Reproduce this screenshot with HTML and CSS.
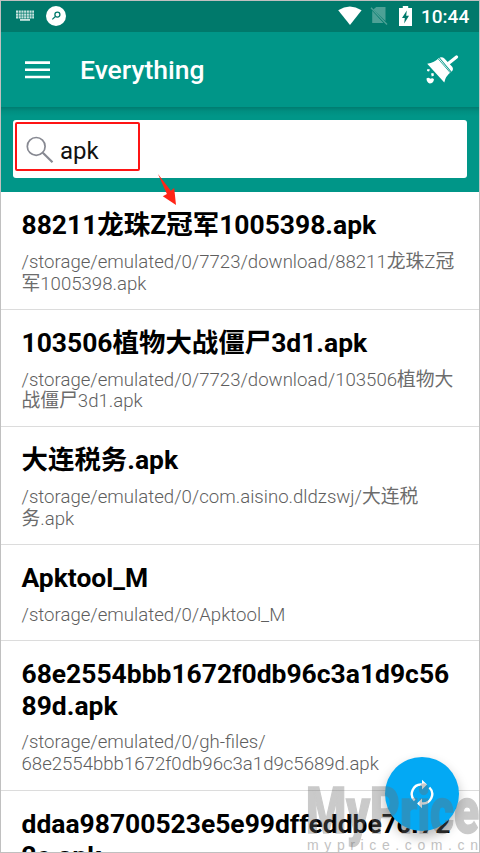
FILE: index.html
```
<!DOCTYPE html>
<html lang="zh">
<head>
<meta charset="utf-8">
<title>Everything</title>
<link rel="stylesheet" href="styles.css">
</head>
<body>
<div class="screen">
  <header class="status">
    <svg class="keyboard" width="20" height="12" viewBox="0 0 20 12">
      <g stroke="#c8e4e0" stroke-width="2.3" stroke-dasharray="2.1 .6">
        <path d="M1 1.6H19M1 4.6H19M1 7.4H19"/>
      </g>
      <path d="M5 9.9H15" stroke="#c8e4e0" stroke-width="1.8"/>
    </svg>
    <svg class="finder" width="20" height="20" viewBox="0 0 20 20">
      <circle cx="10" cy="10" r="10" fill="#fff"/>
      <circle cx="11.4" cy="8.6" r="2.5" fill="none" stroke="#00796b" stroke-width="1.3"/>
      <path d="M9.4 10.5L6.3 13.4" stroke="#00796b" stroke-width="1.2"/>
    </svg>
    <svg class="wifi" width="24" height="20" viewBox="0 0 24 20"><path d="M.2 4.2Q11.8-3.2 23.6 4.2L12 19Z" fill="#fff"/></svg>
    <svg class="sim" width="18" height="20" viewBox="0 0 18 20">
      <path d="M6.2 1H15.5V15L3.3 3.5ZM2.2 4.8L13.5 17H2.2Z" fill="#4da196"/>
      <path d="M1 1.8L17 18.4" stroke="#4da196" stroke-width="1.4"/>
    </svg>
    <svg class="battery" width="13" height="20" viewBox="0 0 13 20">
      <path d="M3.8 0H9.2V2H13V20H0V2H3.8Z" fill="#fff"/>
      <path d="M7.8 4.5L3 12H5.8L5.2 17.5L10 9.8H7.2Z" fill="#00796b"/>
    </svg>
    <span class="clock">10:44</span>
  </header>
  <div class="toolbar">
    <svg class="menu" width="25" height="18" viewBox="0 0 25 18"><path d="M0 1.6H25M0 8.8H25M0 16H25" stroke="#fff" stroke-width="2.6"/></svg>
    <h1>Everything</h1>
    <svg class="brush" width="33" height="30" viewBox="0 0 33 30">
      <path d="M1.2 8.8Q8.5 7.5 13 3L24.8 17.3Q19.5 21 18.3 27.5Z" fill="#fff"/>
      <path d="M13.6 2.6Q16.3 1.3 18.4 3.6L26.2 11.8Q28 14.5 25.6 16.7Z" fill="#fff"/>
      <path d="M22 8.7L30.5 2" stroke="#fff" stroke-width="3.2" stroke-linecap="round"/>
      <path d="M12.3 4L24.5 18" stroke="#009688" stroke-width=".8"/>
      <path d="M1.4 14L4 14.5L3 16.5L1 16ZM5 18.5L7.4 18L8 20.5L5.8 21.5ZM.5 23.5Q2.5 22 4.2 23.8Q6.8 22.3 8 24.5Q7.3 28.5 3.6 28.5Q.5 27 .5 23.5Z" fill="#fff"/>
    </svg>
  </div>
  <div class="searchbar">
    <div class="field">
      <div class="query">
        <svg class="lens" width="28" height="28" viewBox="0 0 28 28" fill="none" stroke="#878992"><circle cx="10.2" cy="10.4" r="8.9" stroke-width="1.7"/><path d="M16.8 16.8L26.5 26.3" stroke-width="2.2"/></svg>
        <span>apk</span>
      </div>
    </div>
    <svg class="arrow" width="20" height="32" viewBox="0 0 20 32"><path d="M1 0L13.8 16.7L17.2 14L19 31L5.8 22.2L9.9 20Z" fill="#ff2517"/></svg>
  </div>
  <main class="list">
    <article><h2>88211龙珠Z冠军1005398.apk</h2><p>/storage/emulated/0/7723/download/88211<b>龙珠</b>Z<b>冠</b><br><b>军</b>1005398.apk</p></article>
    <article><h2>103506植物大战僵尸3d1.apk</h2><p>/storage/emulated/0/7723/download/103506<b>植物大</b><br><b>战僵尸</b>3d1.apk</p></article>
    <article><h2>大连税务.apk</h2><p>/storage/emulated/0/com.aisino.dldzswj/<b>大连税</b><br><b>务</b>.apk</p></article>
    <article class="single"><h2>Apktool_M</h2><p>/storage/emulated/0/Apktool_M</p></article>
    <article class="tall"><h2>68e2554bbb1672f0db96c3a1d9c56<br>89d.apk</h2><p>/storage/emulated/0/gh-files/<br>68e2554bbb1672f0db96c3a1d9c5689d.apk</p></article>
    <article class="tall"><h2>ddaa98700523e5e99dffeddbe7cf72<br>2c.apk</h2></article>
  </main>
  <div class="fab">
    <svg width="24" height="30" viewBox="0 0 24 30" fill="none" stroke="#fff" stroke-width="2.4">
      <path d="M4.6 21.5A9.3 9.3 0 0 1 12 5.6H14M19.4 8.5A9.3 9.3 0 0 1 12 24.4H10"/>
      <path d="M12 .8V10.4L17 5.6ZM12 19.6V29.2L7 24.4Z" fill="#fff" stroke="none"/>
    </svg>
  </div>
  <svg class="watermark" width="176" height="77" viewBox="0 0 176 77">
    <text class="brand" x="1" y="58" textLength="173" lengthAdjust="spacingAndGlyphs">MyPrice</text>
    <text class="site" x="2" y="75" textLength="171">myprice.com.cn</text>
  </svg>
</div>
</body>
</html>
```
FILE: styles.css
```
* { box-sizing: border-box; }
body { margin: 0; font-family: Roboto, "Noto Sans CJK SC", sans-serif; }
.screen { position: relative; width: 480px; height: 853px; overflow: hidden; border: 1px solid #c0c0c0; background: #fff; }
svg { display: block; flex: none; }
h1, h2, p { margin: 0; }

.status { display: flex; height: 31px; background: #00796b; color: #fff; }
.keyboard { margin: 9px 0 0 14px; }
.finder { margin: 5px 0 0 11px; }
.wifi { margin: 5px 0 0 272px; }
.sim { margin: 5px 0 0 8px; }
.battery { margin: 5px 0 0 11px; }
.clock { margin: 1px 0 0 9px; font-size: 19px; font-weight: 500; line-height: 30px; white-space: nowrap; }

.toolbar { display: flex; height: 75px; background: #009688; color: #fff; }
.menu { margin: 29px 0 0 24px; }
.toolbar h1 { width: 346px; margin-left: 30px; font-size: 26.5px; font-weight: 500; line-height: 75px; }
.brush { margin: 23px 0 0; }

.searchbar { position: relative; height: 85px; padding: 13px 12px 0; background: linear-gradient(#007c70, #008e80 4px, #009688 9px); }
.field { height: 58px; padding: 2px; border-radius: 3px; background: #fff; }
.query { display: flex; width: 125px; height: 49px; border: 2px solid #fe1414; border-radius: 2px; font-size: 24px; line-height: 55px; color: #111; }
.lens { margin: 12px 6px 0 9px; }
.arrow { position: absolute; left: 156px; top: 67px; z-index: 1; }

.list { white-space: nowrap; }
article { height: 117.7px; padding: 17px 0 0 20.5px; border-bottom: 1px solid #dcdcdc; }
article h2 { font-size: 26.45px; font-weight: 700; line-height: 32px; color: #000; }
article p { margin-top: 11px; font-size: 18.6px; font-weight: 300; line-height: 21.7px; color: #5e5e5e; }
article b { font-size: 18.8px; font-weight: 400; line-height: 1; color: #6c6c6c; }
.single { height: 96px; }
.tall { height: 150px; }
.tall p { margin-top: 10px; }

.fab { position: absolute; left: 384px; top: 756px; width: 74px; height: 74px; padding: 22px 25px; border-radius: 50%; background: #03a9f4; box-shadow: 0 6px 12px rgba(0, 0, 0, .28); }
.watermark { position: absolute; left: 304px; top: 774px; fill: #6e6e6e; }
.brand { font: 900 65px Roboto, sans-serif; stroke: #6e6e6e; stroke-width: 1.5px; opacity: .36; }
.site { font: 14px "Liberation Sans", sans-serif; opacity: .42; }
```
